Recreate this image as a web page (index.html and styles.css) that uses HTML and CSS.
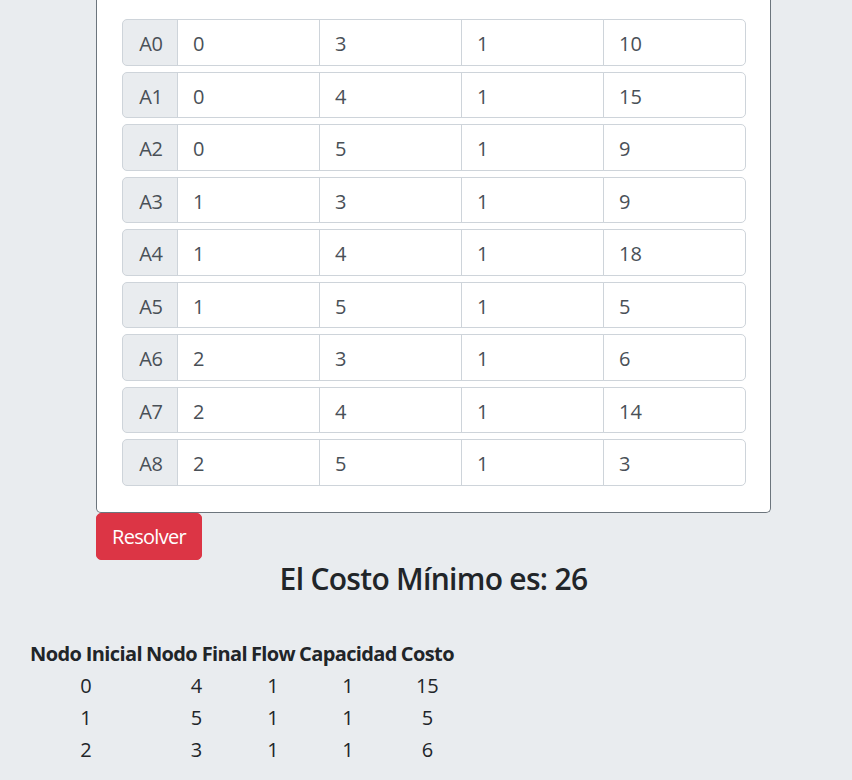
FILE: index.html
```html
<!DOCTYPE html>
<html lang="es">
<head>
<meta charset="utf-8">
<title>Costo Mínimo</title>
<link rel="stylesheet" href="styles.css">
</head>
<body>
<div class="wrap">
  <div class="card">
    <div class="group"><div class="pre">A0</div><div class="cell">0</div><div class="cell">3</div><div class="cell">1</div><div class="cell last">10</div></div>
    <div class="group"><div class="pre">A1</div><div class="cell">0</div><div class="cell">4</div><div class="cell">1</div><div class="cell last">15</div></div>
    <div class="group"><div class="pre">A2</div><div class="cell">0</div><div class="cell">5</div><div class="cell">1</div><div class="cell last">9</div></div>
    <div class="group"><div class="pre">A3</div><div class="cell">1</div><div class="cell">3</div><div class="cell">1</div><div class="cell last">9</div></div>
    <div class="group"><div class="pre">A4</div><div class="cell">1</div><div class="cell">4</div><div class="cell">1</div><div class="cell last">18</div></div>
    <div class="group"><div class="pre">A5</div><div class="cell">1</div><div class="cell">5</div><div class="cell">1</div><div class="cell last">5</div></div>
    <div class="group"><div class="pre">A6</div><div class="cell">2</div><div class="cell">3</div><div class="cell">1</div><div class="cell last">6</div></div>
    <div class="group"><div class="pre">A7</div><div class="cell">2</div><div class="cell">4</div><div class="cell">1</div><div class="cell last">14</div></div>
    <div class="group"><div class="pre">A8</div><div class="cell">2</div><div class="cell">5</div><div class="cell">1</div><div class="cell last">3</div></div>
  </div>
  <button class="btn" type="button">Resolver</button>
  <h4 class="result">El Costo Mínimo es: 26</h4>
</div>
<table class="res">
  <thead>
    <tr><th>Nodo Inicial</th><th>Nodo Final</th><th>Flow</th><th>Capacidad</th><th>Costo</th></tr>
  </thead>
  <tbody>
    <tr><td>0</td><td>4</td><td>1</td><td>1</td><td>15</td></tr>
    <tr><td>1</td><td>5</td><td>1</td><td>1</td><td>5</td></tr>
    <tr><td>2</td><td>3</td><td>1</td><td>1</td><td>6</td></tr>
  </tbody>
</table>
</body>
</html>
```
FILE: styles.css
```css
html, body {
  margin: 0;
  padding: 0;
}
body {
  background: #e9ecef;
  font-family: "Open Sans", "Noto Sans", sans-serif;
  font-size: 20px;
  line-height: 30px;
  color: #212529;
}
.wrap {
  width: 675px;
  margin-left: 96px;
}
.card {
  background: #fff;
  border: 1px solid #6c757d;
  border-top: none;
  border-radius: 0 0 5px 5px;
  padding: 19px 24px 26px 25px;
}
.group {
  display: flex;
  height: 46.5px;
  margin-bottom: 6px;
}
.group:last-child {
  margin-bottom: 0;
}
.pre {
  box-sizing: border-box;
  width: 56px;
  flex: none;
  background: #e9ecef;
  border: 1px solid #ced4da;
  border-radius: 5px 0 0 5px;
  color: #495057;
  display: flex;
  align-items: center;
  justify-content: center;
  padding: 4px 0 0 2px;
  letter-spacing: -0.3px;
}
.cell {
  box-sizing: border-box;
  flex: 1 1 0;
  min-width: 0;
  border: 1px solid #ced4da;
  margin-left: -1px;
  padding: 4px 15px 0;
  color: #495057;
  display: flex;
  align-items: center;
  background: #fff;
}
.cell.last {
  border-radius: 0 5px 5px 0;
}
.btn {
  display: block;
  margin: 0;
  background: #dc3545;
  color: #fff;
  border: 1px solid #dc3545;
  border-radius: 5px;
  font-family: inherit;
  font-size: 20px;
  line-height: 30px;
  letter-spacing: -0.7px;
  padding: 8px 15px 7px 15px;
  cursor: pointer;
}
.result {
  margin: 1px 0 0;
  text-align: center;
  font-size: 30px;
  line-height: 36px;
  font-weight: 600;
  letter-spacing: -0.7px;
}
.res {
  margin: 40px 0 0 27px;
  border-spacing: 2px;
}
.res th, .res td {
  padding: 0 1px;
  text-align: center;
  line-height: 30px;
}
.res th {
  font-weight: 700;
  letter-spacing: -0.62px;
}
```
